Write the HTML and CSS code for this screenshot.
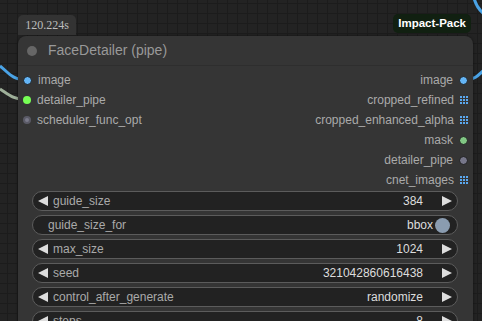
FILE: index.html
```html
<!DOCTYPE html>
<html>
<head>
<meta charset="utf-8">
<link rel="stylesheet" href="styles.css">
</head>
<body>
<div class="canvas">
  <svg class="links" width="482" height="321" viewBox="0 0 482 321">
    <path d="M0 66 C 8 72, 12 80, 27 80" stroke="#4aa3e6" stroke-width="3" fill="none"/>
    <path d="M0 89 C 8 94, 14 100, 27 100" stroke="#9fb09a" stroke-width="3" fill="none"/>
    <path d="M464 80 C 474 80, 478 76, 484 70" stroke="#4aa3e6" stroke-width="3" fill="none"/>
    <path d="M474 -2 C 476 6, 479 10, 484 14" stroke="#4aa3e6" stroke-width="3" fill="none"/>
  </svg>
  <div class="node">
    <div class="badge-time">120.224s</div>
    <div class="badge-pack">Impact-Pack</div>
    <div class="title"><span class="title-dot"></span><span class="title-text">FaceDetailer (pipe)</span></div>
    <div class="slots">
      <div class="col inputs">
        <div class="slot"><span class="dot blue"></span><span>image</span></div>
        <div class="slot"><span class="dot green"></span><span>detailer_pipe</span></div>
        <div class="slot"><span class="dot ring"></span><span>scheduler_func_opt</span></div>
      </div>
      <div class="col outputs">
        <div class="slot"><span>image</span><span class="dot blue out"></span></div>
        <div class="slot"><span>cropped_refined</span><span class="grid-icon"></span></div>
        <div class="slot"><span>cropped_enhanced_alpha</span><span class="grid-icon"></span></div>
        <div class="slot"><span>mask</span><span class="dot mgreen"></span></div>
        <div class="slot"><span>detailer_pipe</span><span class="dot grey"></span></div>
        <div class="slot"><span>cnet_images</span><span class="grid-icon"></span></div>
      </div>
    </div>
    <div class="widgets">
      <div class="widget"><span class="arrow left"></span><span class="label">guide_size</span><span class="value">384</span><span class="arrow right"></span></div>
      <div class="widget toggle"><span class="label">guide_size_for</span><span class="value">bbox</span><span class="knob"></span></div>
      <div class="widget"><span class="arrow left"></span><span class="label">max_size</span><span class="value">1024</span><span class="arrow right"></span></div>
      <div class="widget"><span class="arrow left"></span><span class="label">seed</span><span class="value">321042860616438</span><span class="arrow right"></span></div>
      <div class="widget"><span class="arrow left"></span><span class="label">control_after_generate</span><span class="value">randomize</span><span class="arrow right"></span></div>
      <div class="widget"><span class="arrow left"></span><span class="label">steps</span><span class="value">8</span><span class="arrow right"></span></div>
    </div>
  </div>
</div>
</body>
</html>
```
FILE: styles.css
```css
html, body {
  margin: 0;
  padding: 0;
  background: #222;
}
.canvas {
  position: relative;
  width: 482px;
  height: 321px;
  overflow: hidden;
  background-color: #232323;
  background-image:
    linear-gradient(to right, #1c1c1c 1px, transparent 1px),
    linear-gradient(to bottom, #1c1c1c 1px, transparent 1px);
  background-size: 10px 10px;
  background-position: 7px 3px;
  font-family: "Liberation Sans", Arial, sans-serif;
}
.links {
  position: absolute;
  left: 0;
  top: 0;
}
.node {
  position: absolute;
  left: 18px;
  top: 36px;
  width: 455px;
  height: 300px;
  background: #353535;
  border-radius: 8px 8px 0 0;
  box-shadow: 0 0 3px rgba(0,0,0,0.5);
}
.badge-time {
  position: absolute;
  left: 0;
  top: -21px;
  height: 20px;
  width: 58px;
  background: #333;
  border-radius: 5px 5px 0 0;
  font-family: "Liberation Serif", "Times New Roman", serif;
  font-size: 12px;
  line-height: 20px;
  color: #bdbdbd;
  text-align: center;
  box-sizing: border-box;
}
.badge-pack {
  position: absolute;
  right: 2px;
  top: -22px;
  height: 19px;
  padding: 0 5px;
  background: #112011;
  border-radius: 5px;
  color: #fff;
  font-size: 11.5px;
  font-weight: bold;
  line-height: 19px;
}
.title {
  height: 30px;
  display: flex;
  align-items: center;
  border-bottom: 1px solid #2e2e2e;
  box-sizing: border-box;
}
.title-dot {
  width: 10px;
  height: 10px;
  border-radius: 50%;
  background: #666;
  margin-left: 9px;
}
.title-text {
  margin-left: 11px;
  color: #999;
  font-size: 14px;
  margin-top: -1px;
}
.slots {
  display: flex;
  justify-content: space-between;
  padding-top: 4px;
}
.col {
  display: flex;
  flex-direction: column;
}
.slot {
  height: 20px;
  display: flex;
  align-items: center;
  font-size: 12px;
  color: #aaa;
}
.inputs .slot span:last-child {
  margin-left: 6px;
}
.inputs .dot {
  margin-left: 5px;
}
.outputs .slot {
  justify-content: flex-end;
}
.outputs .slot span:first-child {
  margin-right: 6px;
}
.outputs .dot, .outputs .grid-icon {
  margin-right: 5px;
}
.dot {
  width: 8px;
  height: 8px;
  border-radius: 50%;
  box-sizing: border-box;
  display: inline-block;
}
.dot.blue { background: #64b5f6; border: 1px solid #1e1e1e; width: 9px; height: 9px; }
.dot.green { background: #77ff55; }
.dot.ring { background: #7a7a8a; border: 2px solid #5a5a66; }
.dot.mgreen { background: #81c784; border: 1px solid #1e1e1e; width: 9px; height: 9px; }
.dot.grey { background: #77778a; border: 1px solid #1e1e1e; width: 9px; height: 9px; }
.grid-icon {
  width: 8px;
  height: 8px;
  display: inline-block;
  background-color: #5aa8f0;
  background-image:
    linear-gradient(to right, transparent 2px, #353535 2px, #353535 3px, transparent 3px, transparent 5px, #353535 5px, #353535 6px, transparent 6px),
    linear-gradient(to bottom, transparent 2px, #353535 2px, #353535 3px, transparent 3px, transparent 5px, #353535 5px, #353535 6px, transparent 6px);
}
.widgets {
  display: flex;
  flex-direction: column;
  gap: 4px;
  margin: 1px 15px 0 14px;
}
.widget {
  height: 20px;
  box-sizing: border-box;
  border: 1px solid #5c5c5c;
  border-radius: 10px;
  background: #222;
  display: flex;
  align-items: center;
  font-size: 12px;
  padding: 0 5px 0 5px;
}
.widget .label {
  color: #aaa;
  margin-left: 5px;
  flex: 1;
}
.widget .value {
  color: #ddd;
}
.arrow {
  width: 0;
  height: 0;
  border-top: 5px solid transparent;
  border-bottom: 5px solid transparent;
}
.arrow.left {
  border-right: 10px solid #ddd;
}
.arrow.right {
  border-left: 10px solid #ddd;
  margin-left: 19px;
}
.widget.toggle .label {
  margin-left: 10px;
}
.widget.toggle {
  padding-right: 7px;
}
.knob {
  width: 15px;
  height: 15px;
  border-radius: 50%;
  background: #8a9cb0;
  margin-left: 2px;
}
```
